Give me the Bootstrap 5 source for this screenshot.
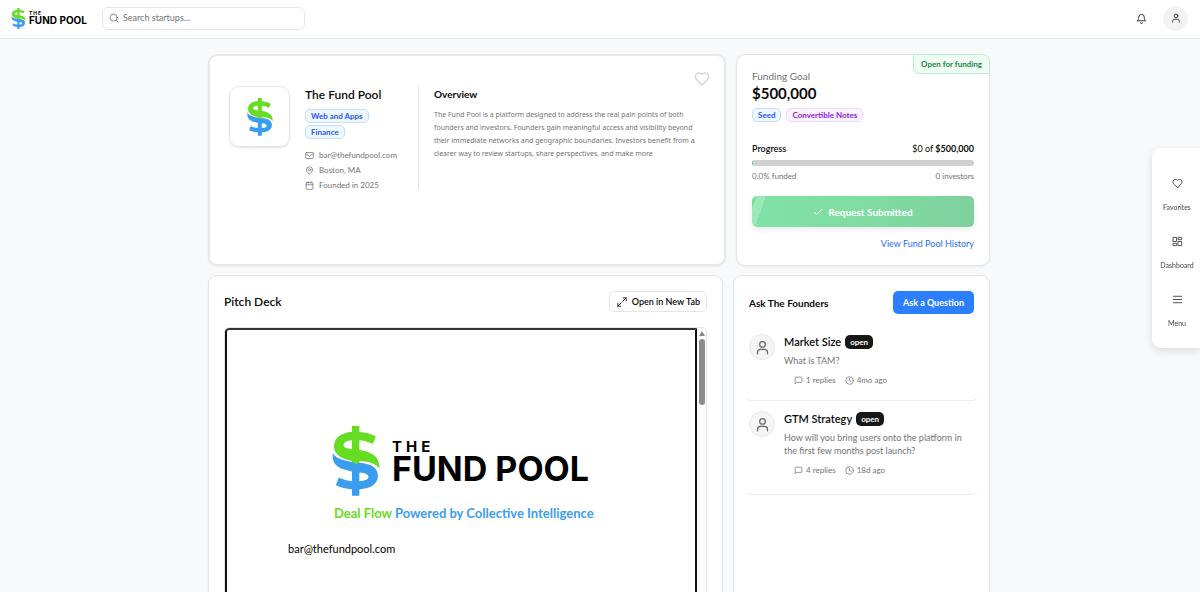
<!DOCTYPE html>
<html lang="en">
<head>
<meta charset="utf-8">
<meta name="viewport" content="width=device-width, initial-scale=1">
<title>The Fund Pool</title>
<link href="https://cdn.jsdelivr.net/npm/bootstrap@5.3.0/dist/css/bootstrap.min.css" rel="stylesheet">
<style>
:root{--line:#e5e5e5;--muted:#737373;--ink:#0a0a0a;--green:#66dd22;--blue:#3b9ded}
body{font-family:Lato,"Open Sans",sans-serif;font-size:8px;line-height:12px;color:var(--ink);background:#f8f9fb}
svg.ic{fill:none;stroke:currentColor;stroke-width:2;stroke-linecap:round;stroke-linejoin:round;flex:none;display:block}
a{text-decoration:none}
.muted{color:var(--muted)}
.semi{font-weight:600}
.topbar{height:39px;background:#fff;border-bottom:1px solid var(--line);padding:0 12px 2px 11px}
.brand{color:#000;gap:3px}
.wordmark{font-family:Inter,sans-serif;font-weight:700;color:#000}
.wordmark span{display:block}
.brand .the{font-size:5px;line-height:5px;letter-spacing:1px}
.brand .fp{font-size:10px;line-height:9px}
.search{width:203px;height:23px;border:1px solid var(--line);border-radius:6px;padding:0 6px;gap:4px;margin-left:15px;color:var(--muted)}
.search input{border:0;outline:0;background:none;font-size:9px;line-height:12px;padding:0;min-width:0}
.search input::placeholder{color:var(--muted);opacity:1}
.icon-btn{border:0;background:none;padding:0;color:#222;display:grid;place-items:center}
.user-btn{width:25px;height:25px;border-radius:50%;background:#f3f3f3}
.page{max-width:784px;width:100%;margin:0 auto;padding:15px 2px 0 0;gap:9px}
.tiles{display:grid;gap:10px}
.tiles-top{grid-template-columns:minmax(0,518fr) minmax(0,254fr)}
.tiles-low{grid-template-columns:minmax(0,515fr) minmax(0,257fr);min-height:600px}
.panel{background:#fff;border:1px solid var(--line);border-radius:9px;box-shadow:0 1px 2px rgba(0,0,0,.06);padding:15px;position:relative}
.panel-hero{border-width:2px;border-color:#e8e8e8;padding:30px 20px 20px 19px}
.logo-box{width:61px;height:61px;border:1px solid var(--line);border-radius:10px;box-shadow:0 1px 2px rgba(0,0,0,.12);display:grid;place-items:center;flex:none}
.company{width:128px;padding-left:15px;flex:none}
.name{font-size:12px;line-height:18px;font-weight:600;margin:0 0 5px}
.chips{display:flex;gap:5px}
.chips-stack{flex-direction:column;align-items:flex-start;gap:2px}
.chip{font-size:8px;line-height:12px;font-weight:700;padding:0 5px;border:1px solid #bfdffd;border-radius:5px;background:#eff7ff;color:#2459e8}
.chip-violet{border-color:#ecd8ff;background:#faf4ff;color:#8f22e2}
.facts{margin:10px 0 0;padding:0;list-style:none;display:grid;gap:3px}
.facts li{display:flex;align-items:center;gap:5px}
.overview{border-left:1px solid var(--line);padding-left:15px;min-height:103px}
.h-sub{font-size:10px;line-height:16px;font-weight:700;margin:0}
.overview p{font-family:"Noto Sans","Open Sans",sans-serif;font-size:7px;line-height:13px;margin:6px 0 0}
.fav{position:absolute;top:15px;right:14px;color:#d4d4d4}
.ribbon{position:absolute;top:-1px;right:-1px;border:1px solid #b9f0cc;border-radius:0 8px 0 6px;background:#f0fdf4;color:#178a43;font-size:8px;line-height:18px;font-weight:700;padding:0 7px}
.goal-label{font-size:10px}
.amount{font-size:15px;line-height:22px;font-weight:700}
.prog-head{font-size:9px;margin:21px 0 5px}
.meter{height:6px;border-radius:6px;background:#d0d0d0;--bs-progress-bar-bg:#4ade80}
.submit{display:flex;width:100%;height:31px;margin-top:14px;align-items:center;justify-content:center;gap:5px;border:0;border-radius:5px;color:#fff;font-size:10px;font-weight:700;background:linear-gradient(110deg,#7cdda0 0 2%,#9ce8b8 2% 6%,#80e1a7 6%,#80dca3 50%,#7fd09c);box-shadow:0 3px 6px rgba(0,0,0,.08)}
.history{margin-top:11px}
.link-blue{color:#1d6fe8;font-size:9px}
.h-card{font-size:12px;line-height:20px;font-weight:600;margin:0}
.h-side{font-size:10px;font-weight:700}
.btn-line{display:flex;align-items:center;gap:5px;height:21px;border:1px solid var(--line);border-radius:5px;background:#fff;font-size:9px;font-weight:600;padding:0 6px 0 7px;color:var(--ink)}
.btn-ask{height:23px;border:0;border-radius:5px;background:#2b7fff;color:#fff;font-size:9px;font-weight:700;padding:0 10px}
.viewer{margin-top:15px;height:540px;border:1px solid var(--line);border-radius:5px;overflow:hidden}
.slide{border:2px solid #111;border-top-color:#333;border-radius:4px 0 0 0;padding:96px 61px 0}
.slide-logo{gap:12px;padding-left:44px}
.slide-logo .wordmark{padding-top:4px}
.slide-logo .the{font-size:15px;line-height:12px;letter-spacing:4px}
.slide-logo .fp{font-size:34px;line-height:32px}
.tagline{font-weight:700;font-size:13px;line-height:16px;color:var(--blue);padding-left:46px;margin:9px 0 0}
.tagline span{color:var(--green)}
.mail{font-size:11px;line-height:16px;margin:20px 0 0;color:#000}
.rail{width:9px;background:#fcfcfc;padding-top:3px}
.rail i{display:block;margin:0 auto}
.rail .up{border:3px solid transparent;border-top:0;border-bottom:5px solid #888;width:0}
.rail .thumb{width:6px;height:66px;border-radius:3px;background:#8c8c8c;margin-top:3px}
.ask-head{margin-bottom:20px}
.question{margin:0 -4px;padding:0 4px 14px;border-bottom:1px solid #ececec;border-radius:0 0 6px 6px;gap:9px}
.question + .question{padding-top:10px;padding-bottom:18px}
.avatar{width:26px;height:26px;border-radius:50%;background:#f5f5f5;border:1px solid #e8e8e8;display:grid;place-items:center;flex:none;color:#666}
.q-title{font-size:11px;line-height:16px;font-weight:600;margin:0}
.state{background:#171717;color:#fff;font-size:8px;line-height:14px;font-weight:700;border-radius:5px;padding:0 5px}
.q-text{font-size:9px;line-height:13px;margin:4px 0 7px}
.q-meta{gap:9px;padding-left:10px}
.q-meta span{display:flex;align-items:center;gap:3px}
.dock{position:fixed;right:0;top:148px;width:48px;padding:30px 0 17px;background:#fff;border-radius:9px 0 0 9px;box-shadow:0 3px 9px rgba(0,0,0,.12);display:grid;gap:21px}
.dock a{display:grid;justify-items:center;gap:10px;font-size:7px;line-height:16px;color:#444;margin-left:2px}
</style>
</head>
<body class="vh-100 overflow-hidden d-flex flex-column">
<svg width="0" height="0" class="position-absolute" aria-hidden="true">
  <symbol id="dollar" viewBox="0 0 142 208">
    <path fill="#66dd22" fill-rule="evenodd" d="M130 31 121 53C106 46 92 42 81 42V71C110 76 142 84 141 127 128 108 105 106 81 104V112H59V104C38 99 24 94 15 84 8 76 5 68 6 58 6 34 28 20 59 17V0H81V18C98 19 114 23 130 31ZM59 42C44 43 34 48 34 56 34 64 44 67 59 69Z"/>
    <path fill="#3b9ded" fill-rule="evenodd" d="M2 81C10 95 30 102 59 107L70 112 81 109C115 112 137 122 136 150 135 172 115 186 81 188V207H59V188C42 187 26 183 11 176L20 153C34 160 46 163 59 164V135C25 128-2 120 2 81ZM81 138V164C98 163 108 159 108 151 108 143 98 140 81 138Z"/>
  </symbol>
  <symbol id="heart" viewBox="0 0 24 24"><path d="M19 14c1.500-1.500 3-3.200 3-5.500A5.500 5.500 0 0 0 16.500 3c-1.800 0-3 .5-4.500 2-1.500-1.500-2.700-2-4.500-2A5.500 5.500 0 0 0 2 8.500c0 2.300 1.500 4 3 5.500l7 7Z"/></symbol>
  <symbol id="user" viewBox="0 0 24 24"><circle cx="12" cy="7" r="4.500"/><path d="M4 22v-2a5 5 0 0 1 5-5h6a5 5 0 0 1 5 5v2"/></symbol>
  <symbol id="reply" viewBox="0 0 24 24"><path d="M21 15a2 2 0 0 1-2 2H7l-4 4V5a2 2 0 0 1 2-2h14a2 2 0 0 1 2 2z"/></symbol>
  <symbol id="clock" viewBox="0 0 24 24"><circle cx="12" cy="12" r="10"/><path d="M12 6v6l4 2"/></symbol>
</svg>

<header class="topbar d-flex align-items-center flex-shrink-0">
  <a href="#" class="brand d-flex align-items-center" aria-label="The Fund Pool">
    <svg width="15" height="21"><use href="#dollar"/></svg>
    <span class="wordmark"><span class="the">THE</span><span class="fp">FUND POOL</span></span>
  </a>
  <label class="search d-flex align-items-center">
    <svg class="ic" width="10" height="10" viewBox="0 0 24 24"><circle cx="11" cy="11" r="8.500"/><path d="m22 22-5-5"/></svg>
    <input class="flex-fill" type="search" placeholder="Search startups..." aria-label="Search startups">
  </label>
  <div class="ms-auto d-flex align-items-center gap-3">
    <button class="icon-btn" aria-label="Notifications"><svg class="ic" width="11" height="11" viewBox="0 0 24 24"><path d="M10 21.500a2 2 0 0 0 4 0M3 17h18c-1.500-1.500-3-3-3-8A6 6 0 0 0 6 9c0 5-1.500 6.500-3 8Z"/></svg></button>
    <button class="icon-btn user-btn" aria-label="Account"><svg class="ic" width="10" height="10"><use href="#user"/></svg></button>
  </div>
</header>

<main class="page d-flex flex-column">
  <div class="tiles tiles-top flex-shrink-0">
    <section class="panel panel-hero d-flex align-items-start">
      <div class="logo-box"><svg width="26" height="38"><use href="#dollar"/></svg></div>
      <div class="company">
        <h1 class="name">The Fund Pool</h1>
        <div class="chips chips-stack"><span class="chip">Web and Apps</span><span class="chip">Finance</span></div>
        <ul class="facts muted">
          <li><svg class="ic" width="9" height="9" viewBox="0 0 24 24"><rect x="2" y="4" width="20" height="16" rx="2"/><path d="m22 7-10 7L2 7"/></svg>bar@thefundpool.com</li>
          <li><svg class="ic" width="9" height="9" viewBox="0 0 24 24"><path d="M20 10c0 6-8 12-8 12s-8-6-8-12a8 8 0 0 1 16 0Z"/><circle cx="12" cy="10" r="3"/></svg>Boston, MA</li>
          <li><svg class="ic" width="9" height="9" viewBox="0 0 24 24"><rect x="3" y="4" width="18" height="18" rx="2"/><path d="M8 2v4M16 2v4M3 10h18"/></svg>Founded in 2025</li>
        </ul>
      </div>
      <div class="overview flex-fill">
        <h2 class="h-sub">Overview</h2>
        <p class="muted">The Fund Pool is a platform designed to address the real pain points of both founders and investors. Founders gain meaningful access and visibility beyond their immediate networks and geographic boundaries. Investors benefit from a clearer way to review startups, share perspectives, and make more</p>
      </div>
      <button class="icon-btn fav" aria-label="Add to favorites"><svg class="ic" width="16" height="16"><use href="#heart"/></svg></button>
    </section>

    <section class="panel">
      <span class="ribbon">Open for funding</span>
      <div class="goal-label muted">Funding Goal</div>
      <div class="amount">$500,000</div>
      <div class="chips mt-1"><span class="chip">Seed</span><span class="chip chip-violet">Convertible Notes</span></div>
      <div class="d-flex justify-content-between prog-head"><span class="semi">Progress</span><span>$0 of <b>$500,000</b></span></div>
      <div class="progress meter" role="progressbar" aria-label="Funding progress" aria-valuenow="0" aria-valuemin="0" aria-valuemax="100"><div class="progress-bar" style="width:.4%"></div></div>
      <div class="d-flex justify-content-between muted mt-1"><span>0.0% funded</span><span>0 investors</span></div>
      <button class="submit"><svg class="ic" width="10" height="10" viewBox="0 0 24 24"><path d="m3 13 6 5L21 6"/></svg>Request Submitted</button>
      <div class="text-end history"><a href="#" class="link-blue">View Fund Pool History</a></div>
    </section>
  </div>

  <div class="tiles tiles-low">
    <section class="panel">
      <div class="d-flex justify-content-between align-items-center">
        <h2 class="h-card">Pitch Deck</h2>
        <button class="btn-line"><svg class="ic" width="10" height="10" viewBox="0 0 24 24"><path d="M15 2h7v7M22 2l-8 8M9 22H2v-7M2 22l8-8"/></svg>Open in New Tab</button>
      </div>
      <div class="viewer d-flex">
        <div class="slide flex-fill">
          <div class="slide-logo d-flex align-items-center">
            <svg width="48" height="70"><use href="#dollar"/></svg>
            <div class="wordmark"><span class="the">THE</span><span class="fp">FUND POOL</span></div>
          </div>
          <p class="tagline"><span>Deal Flow</span> Powered by Collective Intelligence</p>
          <p class="mail">bar@thefundpool.com</p>
        </div>
        <div class="rail"><i class="up"></i><i class="thumb"></i></div>
      </div>
    </section>

    <section class="panel">
      <div class="d-flex justify-content-between align-items-center ask-head">
        <h2 class="h-card h-side">Ask The Founders</h2>
        <button class="btn-ask">Ask a Question</button>
      </div>
      <article class="question d-flex">
        <div class="avatar"><svg class="ic" width="15" height="15"><use href="#user"/></svg></div>
        <div>
          <div class="d-flex align-items-center gap-1"><h3 class="q-title">Market Size</h3><span class="state">open</span></div>
          <p class="q-text muted">What is TAM?</p>
          <div class="q-meta muted d-flex"><span><svg class="ic" width="9" height="9"><use href="#reply"/></svg>1 replies</span><span><svg class="ic" width="9" height="9"><use href="#clock"/></svg>4mo ago</span></div>
        </div>
      </article>
      <article class="question d-flex">
        <div class="avatar"><svg class="ic" width="15" height="15"><use href="#user"/></svg></div>
        <div>
          <div class="d-flex align-items-center gap-1"><h3 class="q-title">GTM Strategy</h3><span class="state">open</span></div>
          <p class="q-text muted">How will you bring users onto the platform in the first few months post launch?</p>
          <div class="q-meta muted d-flex"><span><svg class="ic" width="9" height="9"><use href="#reply"/></svg>4 replies</span><span><svg class="ic" width="9" height="9"><use href="#clock"/></svg>18d ago</span></div>
        </div>
      </article>
    </section>
  </div>
</main>

<nav class="dock" aria-label="Quick links">
  <a href="#"><svg class="ic" width="11" height="11"><use href="#heart"/></svg>Favorites</a>
  <a href="#"><svg class="ic" width="11" height="11" viewBox="0 0 24 24"><path d="M3 3h7v9H3zM14 3h7v5h-7zM14 12h7v9h-7zM3 16h7v5H3z"/></svg>Dashboard</a>
  <a href="#"><svg class="ic" width="11" height="11" viewBox="0 0 24 24"><path d="M3 5h18M3 12h18M3 19h18"/></svg>Menu</a>
</nav>
<script src="https://cdn.jsdelivr.net/npm/bootstrap@5.3.0/dist/js/bootstrap.bundle.min.js"></script>
</body>
</html>
